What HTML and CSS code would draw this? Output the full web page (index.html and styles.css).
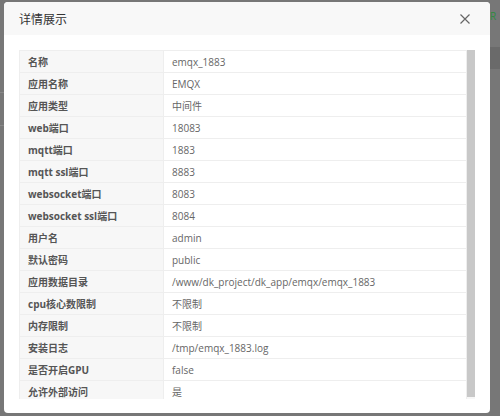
FILE: index.html
```html
<!DOCTYPE html>
<html lang="zh-CN">
<head>
  <meta charset="UTF-8">
  <meta name="viewport" content="width=device-width, initial-scale=1.0">
  <title>详情展示</title>
  <link rel="stylesheet" href="styles.css">
</head>
<body>
  <div class="page">
    <div class="edge-left">
      <span class="ghost-a"></span>
      <span class="ghost-b"></span>
    </div>
    <div class="layer">
      <div class="layer-title">
        <span>详情展示</span>
        <a class="layer-close" href="javascript:;">
          <svg width="10" height="10" viewBox="0 0 10 10">
            <path d="M0.5 0.5 L9.5 9.5 M9.5 0.5 L0.5 9.5" stroke="#666" stroke-width="1.2" fill="none"/>
          </svg>
        </a>
      </div>
      <div class="layer-content">
        <div class="scroll-box">
          <div class="scroll-inner">
            <table class="info-table">
              <tr><th>名称</th><td>emqx_1883</td></tr>
              <tr><th>应用名称</th><td>EMQX</td></tr>
              <tr><th>应用类型</th><td>中间件</td></tr>
              <tr><th>web端口</th><td>18083</td></tr>
              <tr><th>mqtt端口</th><td>1883</td></tr>
              <tr><th>mqtt ssl端口</th><td>8883</td></tr>
              <tr><th>websocket端口</th><td>8083</td></tr>
              <tr><th>websocket ssl端口</th><td>8084</td></tr>
              <tr><th>用户名</th><td>admin</td></tr>
              <tr><th>默认密码</th><td>public</td></tr>
              <tr><th>应用数据目录</th><td>/www/dk_project/dk_app/emqx/emqx_1883</td></tr>
              <tr><th>cpu核心数限制</th><td>不限制</td></tr>
              <tr><th>内存限制</th><td>不限制</td></tr>
              <tr><th>安装日志</th><td>/tmp/emqx_1883.log</td></tr>
              <tr><th>是否开启GPU</th><td>false</td></tr>
              <tr><th>允许外部访问</th><td>是</td></tr>
            </table>
          </div>
          <div class="scroll-track">
            <div class="scroll-thumb"></div>
          </div>
        </div>
      </div>
    </div>
    <div class="edge-right">
      <span class="ghost-green">R</span>
      <span class="ghost-bar"></span>
    </div>
  </div>
</body>
</html>
```

FILE: styles.css
```css
* {
  margin: 0;
  padding: 0;
  box-sizing: border-box;
}
body {
  background-color: #777;
  font-family: "Open Sans", "Noto Sans CJK SC", sans-serif;
}
.page {
  display: flex;
  width: 500px;
  height: 416px;
  padding-top: 2px;
}
.edge-left {
  width: 4px;
  display: flex;
  flex-direction: column;
}
.ghost-a {
  height: 1px;
  margin-top: 90px;
  background-color: #888;
}
.ghost-b {
  height: 1px;
  margin-top: 32px;
  background-color: #888;
}
.layer {
  width: 486px;
  height: 411px;
  background-color: #fff;
  border-radius: 4px;
  overflow: hidden;
  display: flex;
  flex-direction: column;
}
.layer-title {
  height: 33px;
  background-color: #f8f8f8;
  padding: 0 15px;
  display: flex;
  align-items: center;
  justify-content: space-between;
  font-size: 12px;
  color: #333;
}
.layer-close {
  display: flex;
  margin-right: 5px;
}
.layer-content {
  padding: 15px 15px 14px 15px;
}
.scroll-box {
  width: 456px;
  height: 349px;
  display: flex;
}
.scroll-inner {
  width: 448px;
  overflow: hidden;
}
.scroll-track {
  width: 8px;
  background-color: #f7f7f7;
}
.scroll-thumb {
  height: 347px;
  background-color: #c8c8c8;
}
.info-table {
  width: 448px;
  border-collapse: collapse;
  font-size: 10px;
  color: #666;
}
.info-table th,
.info-table td {
  border: 1px solid #eee;
  height: 22px;
  line-height: 20px;
  padding: 0 8px;
  text-align: left;
  white-space: nowrap;
}
.info-table th {
  width: 144px;
  background-color: #f7f7f7;
  font-weight: bold;
  color: #555;
}
.edge-right {
  width: 10px;
  display: flex;
  flex-direction: column;
  overflow: hidden;
}
.ghost-green {
  color: #2e8b3e;
  font-size: 10px;
  line-height: 12px;
  margin-top: 8px;
}
.ghost-bar {
  height: 22px;
  margin-top: 25px;
  background-color: #6a6a6a;
}
```
